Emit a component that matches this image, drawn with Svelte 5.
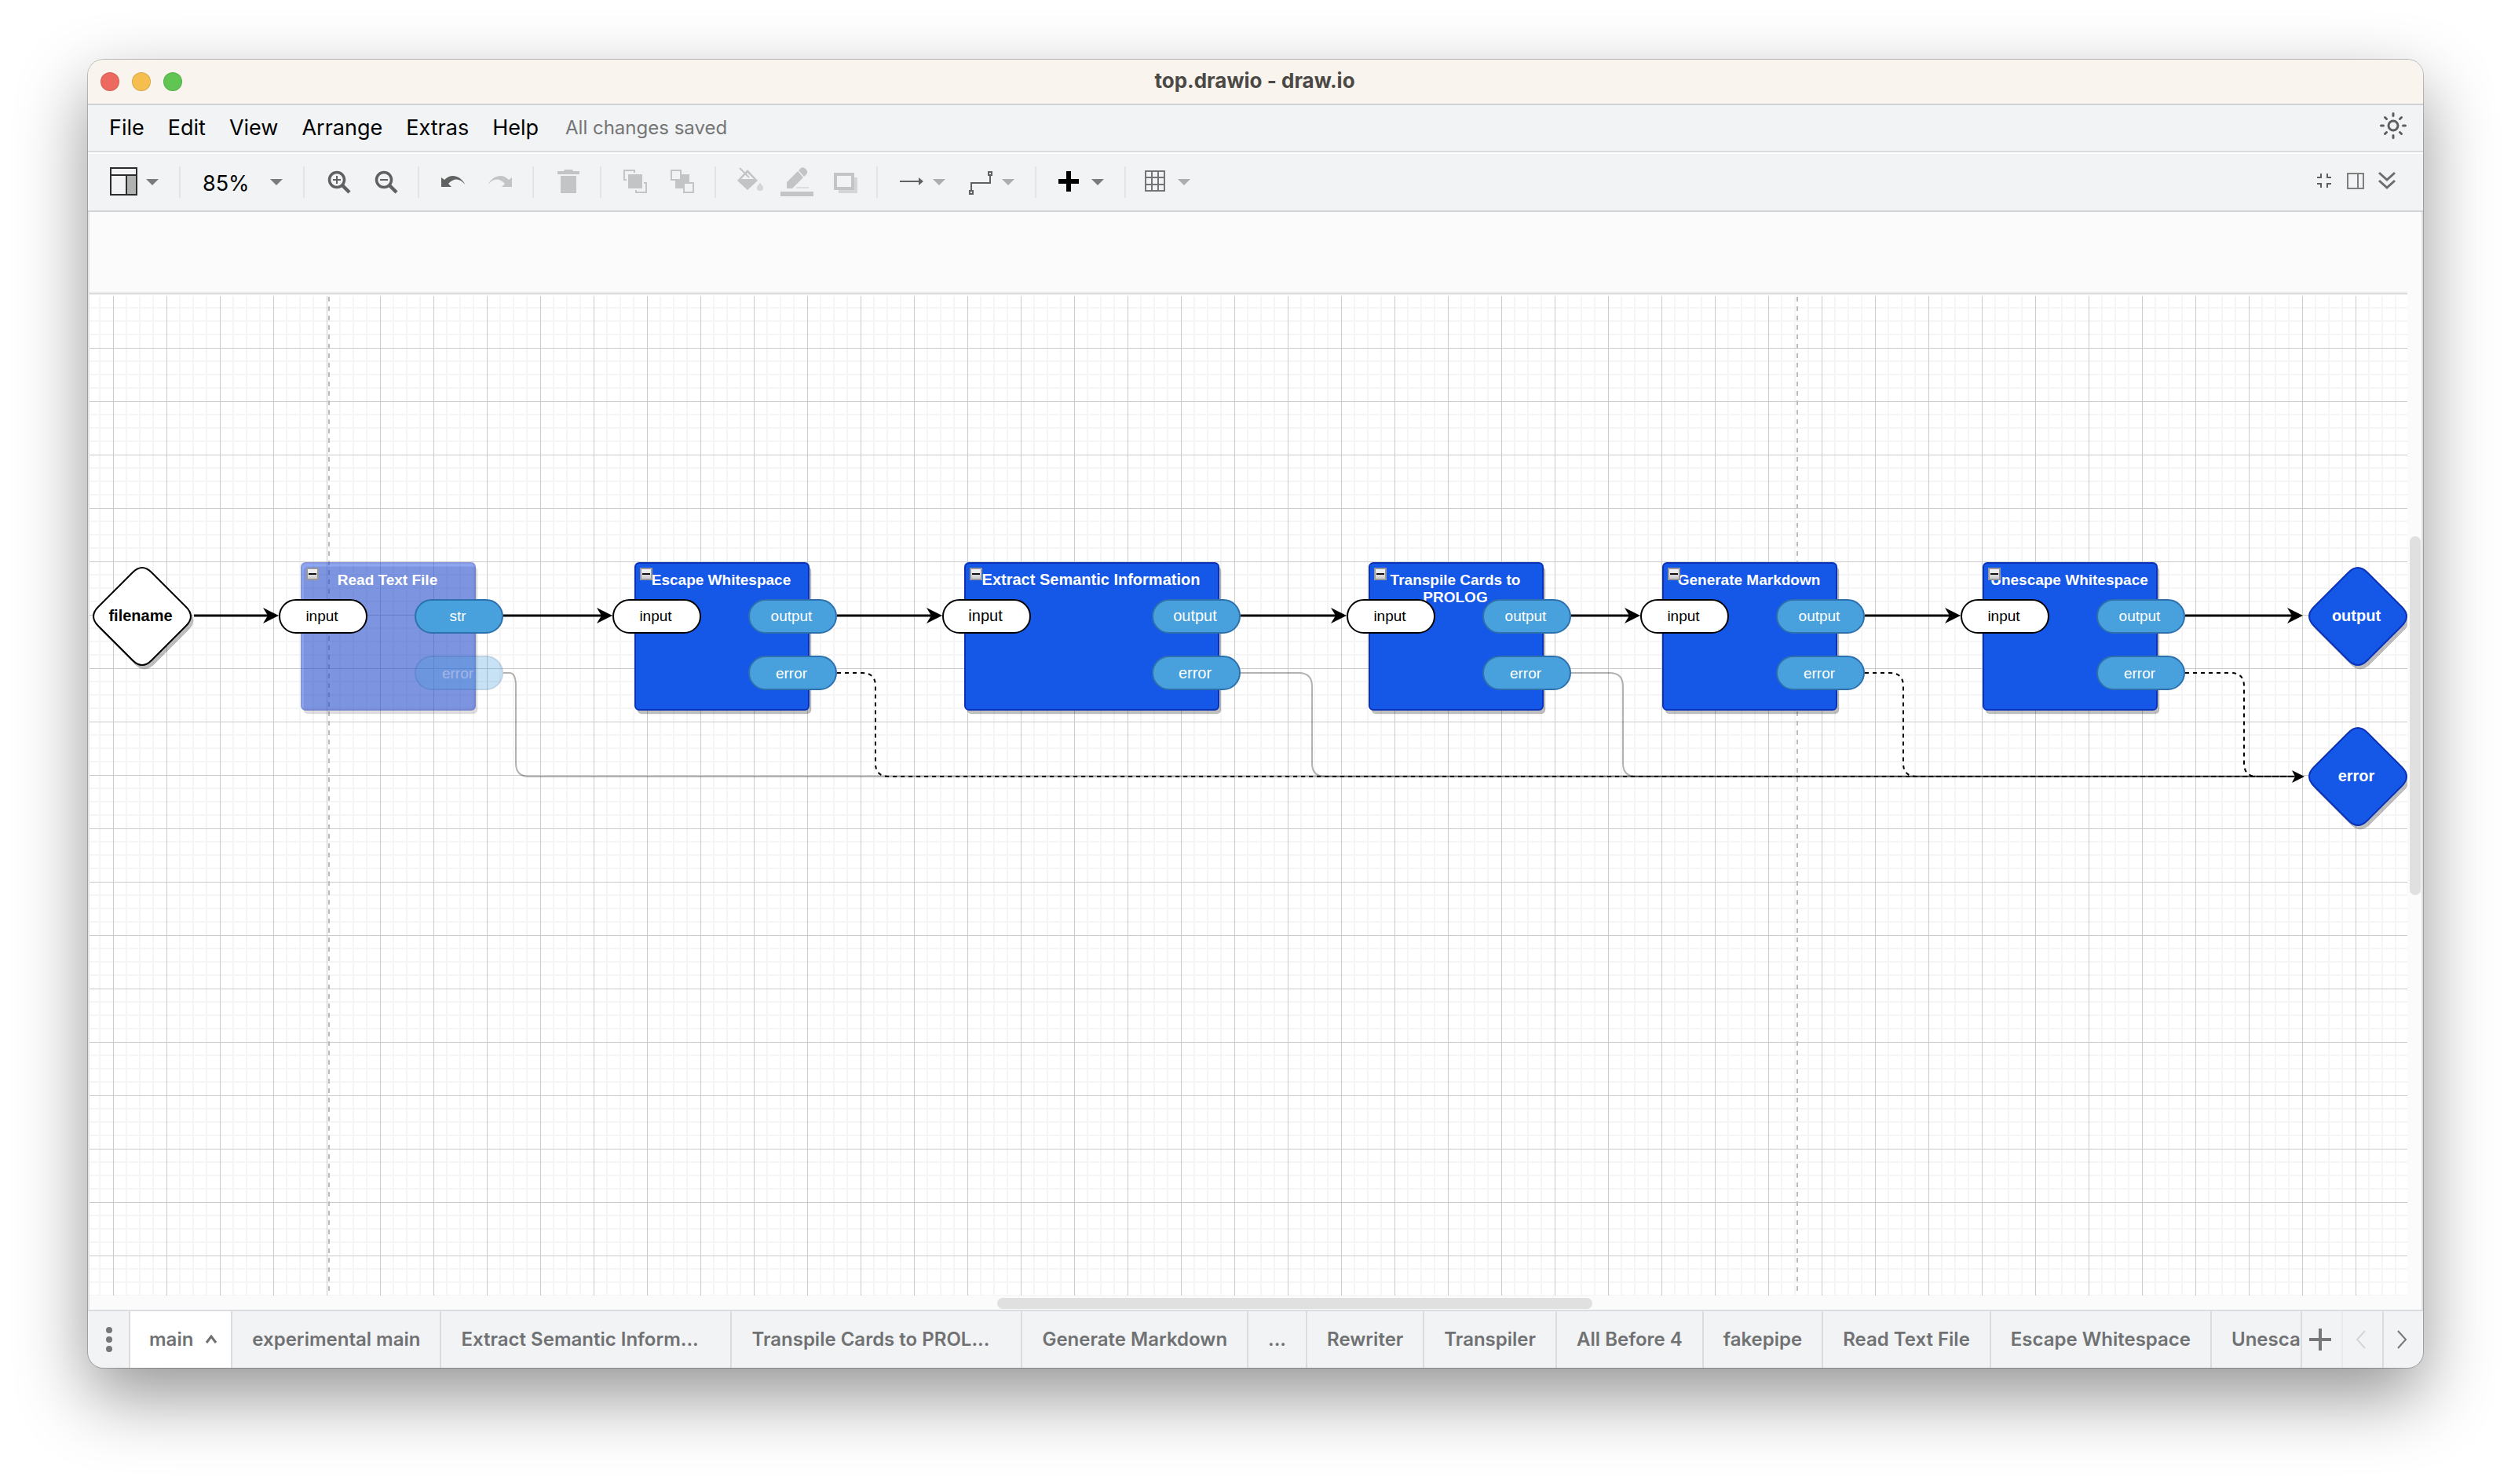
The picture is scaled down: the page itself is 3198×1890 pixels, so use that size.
<script>
  const menus = ['File', 'Edit', 'View', 'Arrange', 'Extras', 'Help'];

  const tabs = [
    { label: 'main', active: true },
    { label: 'experimental main' },
    { label: 'Extract Semantic Inform...', long: true },
    { label: 'Transpile Cards to PROL...', long: true },
    { label: 'Generate Markdown' },
    { label: '...' },
    { label: 'Rewriter' },
    { label: 'Transpiler' },
    { label: 'All Before 4' },
    { label: 'fakepipe' },
    { label: 'Read Text File' },
    { label: 'Escape Whitespace' },
    { label: 'Unescape Whitespace' }
  ];

  const top = 340;
  const lineY = 407;
  const errorY = 480;
  const busY = 612;
  const busEnd = 2821;

  // x and w are the container box, out is the left edge of its output ports
  const blocks = [
    { x: 270, w: 221, out: 415, title: ['Read Text File'], port: 'str', bend: 543, faded: true },
    { x: 695, w: 221, out: 840, title: ['Escape Whitespace'], port: 'output', bend: 1001, dashed: true },
    { x: 1115, w: 323, out: 1354, title: ['Extract Semantic Information'], port: 'output', bend: 1557, large: true },
    { x: 1630, w: 221, out: 1775, title: ['Transpile Cards to', 'PROLOG'], port: 'output', bend: 1953 },
    { x: 2004, w: 221, out: 2149, title: ['Generate Markdown'], port: 'output', bend: 2310, dashed: true },
    { x: 2412, w: 221, out: 2557, title: ['Unescape Whitespace'], port: 'output', bend: 2744, dashed: true }
  ];

  const diamonds = [
    { cx: 67, cy: 408, label: 'filename', kind: 'plain' },
    { cx: 2889, cy: 408, label: 'output', kind: 'blue' },
    { cx: 2889, cy: 612, label: 'error', kind: 'blue' }
  ];

  const flows = blocks.map((b, i) => ({
    from: i === 0 ? 133 : blocks[i - 1].out + 112,
    to: b.x - 29
  }));
  flows.push({ from: blocks[5].out + 112, to: 2819 });

  function errorPath(b) {
    const start = b.out + 112;
    const r = Math.min(17, (b.bend - start) / 2);
    return `M${start} ${errorY}H${b.bend - r}Q${b.bend} ${errorY} ${b.bend} ${errorY + 17}V${busY - 17}Q${b.bend} ${busY} ${b.bend + 17} ${busY}H${busEnd - 8}`;
  }

  const diamondPath =
    'M-12 -56Q0 -68 12 -56L56 -12Q68 0 56 12L12 56Q0 68 -12 56L-56 12Q-68 0 -56 -12Z';
</script>

{#snippet caret(x, dark)}
  <path d="M{x} 20h16l-8 8z" fill={dark ? '#7a7b7b' : '#acaeae'} />
{/snippet}

<div class="desktop">
  <main class="window">
    <header class="titlebar">
      <div class="lights">
        <button class="light red" aria-label="Close"></button>
        <button class="light yellow" aria-label="Minimize"></button>
        <button class="light green" aria-label="Zoom window"></button>
      </div>
      <h1>top.drawio - draw.io</h1>
    </header>

    <nav class="menubar">
      {#each menus as m}
        <button class="menu">{m}</button>
      {/each}
      <span class="status">All changes saved</span>
      <button class="sun" aria-label="Appearance">
        <svg width="36" height="36" viewBox="-18 -18 36 36" stroke="#5c5e60" fill="none">
          <circle r="6" stroke-width="3" />
          <path stroke-width="3" stroke-linecap="round" d="M0-15.500V-12.500M0 12.500V15.500M-15.500 0H-12.500M12.500 0H15.500M-10.500-10.500L-8.500-8.500M10.500-10.500L8.500-8.500M-10.500 10.500L-8.500 8.500M10.500 10.500L8.500 8.500" />
        </svg>
      </button>
    </nav>

    <div class="toolbar">
      <button class="tool drop" aria-label="View">
        <svg width="88" height="48">
          <path d="M31 15h12v25H31z" fill="#b0b1b1" />
          <path d="M11 6h33v34H11zM11 15h33M31 15v25" fill="none" stroke="#2c2c2c" stroke-width="2" />
          {@render caret(56, true)}
        </svg>
      </button>
      <span class="sep"></span>
      <div class="zoom">
        <select aria-label="Zoom"><option>85%</option></select>
        <svg width="132" height="48">{@render caret(100, true)}</svg>
      </div>
      <span class="sep"></span>
      <button class="tool" aria-label="Zoom In">
        <svg width="60" height="48" fill="none" stroke="#5f6161">
          <circle cx="27" cy="21" r="9.500" stroke-width="3.500" />
          <path d="M34 28l9 9" stroke-width="4.500" />
          <path d="M22 21h10M27 16v10" stroke-width="2" />
        </svg>
      </button>
      <button class="tool" aria-label="Zoom Out">
        <svg width="60" height="48" fill="none" stroke="#5f6161">
          <circle cx="27" cy="21" r="9.500" stroke-width="3.500" />
          <path d="M34 28l9 9" stroke-width="4.500" />
          <path d="M22 21h10" stroke-width="2" />
        </svg>
      </button>
      <span class="sep"></span>
      <button class="tool" aria-label="Undo">
        <svg width="60" height="48"><path fill="#606262" d="M14 18L18 21C25 13.500 37 13.500 44.500 27C37 18.500 30 18.500 23 26L27 30H14Z" /></svg>
      </button>
      <button class="tool" aria-label="Redo">
        <svg width="60" height="48"><path fill="#c2c4c5" d="M44 18L40 21C33 13.500 21 13.500 13.500 27C21 18.500 28 18.500 35 26L31 30H44Z" /></svg>
      </button>
      <span class="sep"></span>
      <button class="tool" aria-label="Delete">
        <svg width="60" height="48" fill="#c2c4c5"><path d="M16 10h8l1-2h10l1 2h8v4H16zM20 16h20v22H20z" /></svg>
      </button>
      <span class="sep"></span>
      <button class="tool" aria-label="To Front">
        <svg width="60" height="48">
          <path fill="#c2c4c5" d="M20 14h18v18H20z" />
          <path fill="none" stroke="#c2c4c5" stroke-width="2" d="M28 12V9H15V21H18M30 34V37H43V25H40" />
        </svg>
      </button>
      <button class="tool" aria-label="To Back">
        <svg width="60" height="48">
          <path fill="#c2c4c5" d="M20 14h18v18H20z" />
          <path fill="#f1f3f5" stroke="#c2c4c5" stroke-width="2" d="M15 9h12v12H15zM31 25h12v12H31z" />
        </svg>
      </button>
      <span class="sep"></span>
      <button class="tool" aria-label="Fill Color">
        <svg width="60" height="48">
          <path fill="#c2c4c5" fill-rule="evenodd" d="M26 8L39 22L26 34L13 22ZM26 12L18 20H34Z" />
          <path fill="none" stroke="#c2c4c5" stroke-width="2" d="M16 6L28 18" />
          <path fill="#d3d5d6" d="M42 24C43 28 46 28 46 31A4 4 0 0 1 38 31C38 28 41 28 42 24Z" />
        </svg>
      </button>
      <button class="tool" aria-label="Line Color">
        <svg width="60" height="48" fill="#c2c4c5">
          <path d="M16 24L30 10L37 18L23 32H16ZM31 9L34 6Q37 4 40 7Q44 11 41 14L38 17ZM8 36H50V42H8Z" />
          <path d="M28 30H44V32H28Z" fill="#dcdedf" />
        </svg>
      </button>
      <button class="tool" aria-label="Shadow">
        <svg width="60" height="48">
          <path fill="#d3d5d6" d="M22 18H46V38H22Z" />
          <path fill="#f1f3f5" stroke="#c2c4c5" stroke-width="4" d="M18 14H40V32H18Z" />
        </svg>
      </button>
      <span class="sep"></span>
      <button class="tool drop" aria-label="Connection">
        <svg width="88" height="48">
          <path fill="#606262" d="M14 22H38V18L44 23L38 28V24H14Z" />
          {@render caret(56, false)}
        </svg>
      </button>
      <button class="tool drop" aria-label="Waypoints">
        <svg width="88" height="48">
          <path fill="none" stroke="#606262" stroke-width="2" d="M15 35h4v4h-4zM39 11h4v4h-4zM17 34V25H41V16" />
          {@render caret(56, false)}
        </svg>
      </button>
      <span class="sep"></span>
      <button class="tool drop" aria-label="Insert">
        <svg width="88" height="48">
          <path d="M24 10h6v10h10v6H30v10h-6V26H14v-6h10z" />
          {@render caret(56, true)}
        </svg>
      </button>
      <span class="sep"></span>
      <button class="tool drop" aria-label="Table">
        <svg width="88" height="48">
          <path fill="none" stroke="#747676" stroke-width="2" d="M11 10H35V35H11ZM11 18H35M11 27H35M19 10V35M27 10V35" />
          {@render caret(52, false)}
        </svg>
      </button>
      <div class="right">
        <button class="tool small" aria-label="Fullscreen">
          <svg width="40" height="48" fill="none" stroke="#5c5e60" stroke-width="2"><path d="M11 18H16V13M29 18H24V13M11 26H16V31M29 26H24V31" /></svg>
        </button>
        <button class="tool small" aria-label="Format">
          <svg width="40" height="48" fill="none" stroke="#7e807e" stroke-width="2"><path d="M10 13H30V32H10ZM23 13V32" /></svg>
        </button>
        <button class="tool small" aria-label="Collapse">
          <svg width="40" height="48" fill="none" stroke="#6c6e6e" stroke-width="3"><path d="M10 12L20 21L30 12M10 22L20 31L30 22" /></svg>
        </button>
      </div>
    </div>

    <section class="stage">
      <div class="margin-top"></div>
      <div class="page">
        <svg class="diagram" font-family="'Liberation Sans', Arial, sans-serif">
          <defs>
            <pattern id="grid" x="30" y="-2" width="68" height="68" patternUnits="userSpaceOnUse">
              <path fill="#f5f5f5" d="M16 0h2v68h-2zM33 0h2v68h-2zM50 0h2v68h-2zM0 16h68v2H0zM0 33h68v2H0zM0 50h68v2H0z" />
              <path fill="#cbcbcb" d="M0 0h1v68H0zM0 0h68v1H0z" />
            </pattern>
            <linearGradient id="fold" x1="0" y1="0" x2="0" y2="1">
              <stop offset="0" stop-color="#fafafa" />
              <stop offset="1" stop-color="#c8c8ca" />
            </linearGradient>
          </defs>
          <rect width="100%" height="100%" fill="url(#grid)" />
          <path d="M305 1V2400M2175 1V2400" stroke="#bcbcbc" stroke-width="2" stroke-dasharray="6 6" />

          {#each blocks as b}
            <g opacity={b.faded ? 0.5 : 1}>
              <rect x={b.x + 3} y={top + 5} width={b.w} height="187" rx="5" fill="#000" fill-opacity="0.25" stroke="#000" stroke-opacity="0.1" />
            </g>
            <rect x={b.x} y={top} width={b.w} height="187" rx="5" fill={b.faded ? '#1f4de3' : '#1558e7'} stroke={b.faded ? '#1030c0' : '#0a32b8'} stroke-width="2" opacity={b.faded ? 0.5 : 1} />
            {#each b.title as line, i}
              <text class="bold white" x={b.x + b.w / 2 - 1} y={368 + i * 22} font-size={b.large ? 20 : 19}>{line}</text>
            {/each}
            <g transform="translate({b.x + 6} {top + 6})">
              <rect x="1" y="1" width="14" height="14" fill="url(#fold)" stroke="#98989e" stroke-width="2" />
              <path d="M3 8H13" stroke="#111" stroke-width="2" />
            </g>
          {/each}

          {#each blocks as b}
            <path class="wire" class:dashed={b.dashed} class:pale={!b.dashed} d={errorPath(b)} />
          {/each}
          <path d="M{busEnd} {busY}L{busEnd - 16} {busY - 8}L{busEnd - 12} {busY}L{busEnd - 16} {busY + 8}Z" />

          {#each flows as f}
            <path d="M{f.from} {lineY}H{f.to - 12}" stroke="#000" stroke-width="3" />
            <path d="M{f.to} {lineY}L{f.to - 20} {lineY - 10}L{f.to - 14} {lineY}L{f.to - 20} {lineY + 10}Z" />
          {/each}

          {#each blocks as b}
            <rect x={b.x - 28} y="387" width="111" height="42" rx="21" fill="#fff" stroke="#000" stroke-width="2" />
            <text x={b.x + 26} y="414" font-size={b.large ? 20 : 19}>input</text>
            <rect class="port" x={b.out} y="387" width="111" height="42" rx="21" />
            <text class="white" x={b.out + 54} y="414" font-size={b.large ? 20 : 19}>{b.port}</text>
            <g opacity={b.faded ? 0.3 : 1}>
              <rect class="port" x={b.out} y="459" width="111" height="42" rx="21" />
              <text class="white" x={b.out + 54} y="487" font-size={b.large ? 20 : 19}>error</text>
            </g>
          {/each}

          {#each diamonds as d}
            <path d={diamondPath} transform="translate({d.cx + 3} {d.cy + 5})" fill="#000" stroke="#000" stroke-width="1" opacity="0.25" />
            <path class={d.kind} d={diamondPath} transform="translate({d.cx} {d.cy})" stroke-width="2" />
            <text class="bold" class:white={d.kind === 'blue'} x={d.cx - 2} y={d.cy + 6} font-size="20">{d.label}</text>
          {/each}
        </svg>
      </div>
      <div class="vtrack"><span class="thumb"></span></div>
      <div class="htrack"><span class="thumb"></span></div>
    </section>

    <footer class="tabbar">
      <button class="cell dots" aria-label="Pages">
        <svg width="10" height="34" fill="#757779"><circle cx="5" cy="5" r="4" /><circle cx="5" cy="17" r="4" /><circle cx="5" cy="29" r="4" /></svg>
      </button>
      <div class="tabs">
        {#each tabs as t}
          <button class="tab" class:active={t.active} class:long={t.long}>
            {t.label}
            {#if t.active}
              <svg width="14" height="12" fill="none" stroke="#6e7072" stroke-width="3"><path d="M1 10L7 2L13 10" /></svg>
            {/if}
          </button>
        {/each}
      </div>
      <button class="cell plus" aria-label="Insert Page">
        <svg width="28" height="28" stroke="#757779" stroke-width="4"><path d="M14 0V28M0 14H28" /></svg>
      </button>
      <button class="cell faint" aria-label="Previous">
        <svg width="14" height="24" fill="none" stroke="#d3d5d7" stroke-width="2"><path d="M12 1L2 12L12 23" /></svg>
      </button>
      <button class="cell next" aria-label="Next">
        <svg width="14" height="24" fill="none" stroke="#757779" stroke-width="2"><path d="M2 1L12 12L2 23" /></svg>
      </button>
    </footer>
  </main>
</div>

<style>
  :global(body) {
    margin: 0;
    background: #fff;
  }
  button,
  select {
    appearance: none;
    border: 0;
    padding: 0;
    margin: 0;
    background: none;
    font: inherit;
    color: inherit;
  }
  svg {
    display: block;
    flex: none;
  }
  .desktop {
    box-sizing: border-box;
    min-height: 100vh;
    padding: 76px 112px 148px;
    display: flex;
    overflow: hidden;
    font-family: Inter, 'Noto Sans', sans-serif;
  }
  .window {
    flex: 1;
    min-width: 0;
    display: flex;
    flex-direction: column;
    border-radius: 20px;
    overflow: hidden;
    background: #f1f3f5;
    box-shadow:
      0 0 0 1px rgba(0, 0, 0, 0.22),
      0 36px 90px rgba(0, 0, 0, 0.42);
  }
  .titlebar {
    height: 56px;
    display: grid;
    grid-template-columns: 1fr auto 1fr;
    align-items: center;
    padding: 0 18px 0 16px;
    background: #f9f4ed;
    border-bottom: 2px solid #cfd1d4;
  }
  .lights {
    display: flex;
    gap: 16px;
  }
  .light {
    width: 24px;
    height: 24px;
    border-radius: 50%;
    border: 1px solid rgba(0, 0, 0, 0.12);
  }
  .red {
    background: #ed6a5f;
  }
  .yellow {
    background: #f5bf4f;
  }
  .green {
    background: #61c554;
  }
  h1 {
    margin: 0;
    padding-bottom: 2px;
    font-size: 26px;
    line-height: 32px;
    font-weight: 700;
    color: #4b4946;
  }
  .menubar {
    height: 58px;
    display: flex;
    align-items: center;
    gap: 30px;
    padding: 0 20px 0 27px;
    border-bottom: 2px solid #dadce0;
  }
  .menu {
    font-size: 27px;
    line-height: 36px;
    color: #000;
  }
  .status {
    font-size: 24px;
    line-height: 36px;
    color: #757575;
    padding-left: 4px;
  }
  .sun {
    margin-left: auto;
    padding-bottom: 6px;
  }
  .toolbar {
    height: 72px;
    display: flex;
    align-items: center;
    padding-left: 18px;
    border-top: 2px solid #fff;
    border-bottom: 2px solid #d2d3d4;
  }
  .sep {
    width: 2px;
    height: 40px;
    margin: 0 14px 0 10px;
    background: #e2e4e6;
  }
  .zoom {
    display: grid;
    width: 132px;
    height: 48px;
  }
  .zoom > * {
    grid-area: 1 / 1;
  }
  .zoom select {
    padding: 3px 0 0 14px;
    font-size: 27px;
    line-height: 36px;
    color: #000;
  }
  .zoom svg {
    pointer-events: none;
  }
  .right {
    display: flex;
    margin-left: auto;
    padding: 0 26px 0 0;
  }
  .stage {
    flex: 1;
    min-height: 0;
    display: grid;
    grid-template: 102px 1fr 18px / 1fr 18px;
    background: #fbfbfb;
    border-left: 2px solid #e4e5e8;
    border-right: 2px solid #dfe0e6;
  }
  .margin-top {
    grid-area: 1 / 1;
    background: linear-gradient(#fbfbfb, #fbfbfb 101px, #d0d0d0);
    height: 105px;
  }
  .page {
    grid-area: 2 / 1;
    min-width: 0;
    min-height: 0;
    margin-top: 3px;
    border-top: 2px solid #fff;
    background: #fff;
    overflow: hidden;
  }
  .diagram {
    width: 100%;
    height: 100%;
    min-height: 700px;
  }
  .diagram text {
    text-anchor: middle;
  }
  .bold {
    font-weight: 700;
  }
  .white {
    fill: #fff;
  }
  .port {
    fill: #48a0dc;
    stroke: #2d70ae;
    stroke-width: 2px;
  }
  .plain {
    fill: #fff;
    stroke: #000;
  }
  .blue {
    fill: #1558e7;
    stroke: #0a32b8;
  }
  .wire {
    fill: none;
    stroke: #000;
    stroke-width: 2px;
  }
  .dashed {
    stroke-dasharray: 5 5;
  }
  .pale {
    stroke-opacity: 0.3;
  }
  .vtrack {
    grid-area: 2 / 2;
    display: grid;
    grid-template-rows: 311fr 456fr 510fr;
    padding: 0 1px 0 3px;
  }
  .htrack {
    grid-area: 3 / 1;
    display: grid;
    grid-template-columns: 1156fr 758fr 1038fr;
    padding: 3px 0 1px;
  }
  .thumb {
    grid-area: 2 / 1;
    border-radius: 7px;
    background: #e0e0e0;
  }
  .htrack .thumb {
    grid-area: 1 / 2;
  }
  .tabbar {
    height: 72px;
    display: flex;
    border-top: 2px solid #dadce0;
    font-size: 24px;
    line-height: 32px;
    font-weight: 600;
    color: #707173;
  }
  .cell {
    flex: none;
    box-sizing: border-box;
    width: 52px;
    padding-right: 4px;
    display: flex;
    align-items: center;
    justify-content: center;
    border-left: 2px solid #dadce0;
  }
  .dots {
    width: 54px;
    padding: 0 0 0 2px;
    border-left: 0;
    border-right: 2px solid #dadce0;
  }
  .faint {
    border-left-color: #e8eaec;
  }
  .tabs {
    flex: 1;
    min-width: 0;
    display: flex;
    overflow: hidden;
  }
  .tab {
    flex: none;
    box-sizing: border-box;
    display: flex;
    align-items: center;
    gap: 16px;
    padding: 0 25px;
    border-right: 2px solid #dadce0;
    white-space: nowrap;
  }
  .active {
    background: #fff;
    padding: 0 18px 0 24px;
  }
  .long {
    width: 370px;
  }
</style>
